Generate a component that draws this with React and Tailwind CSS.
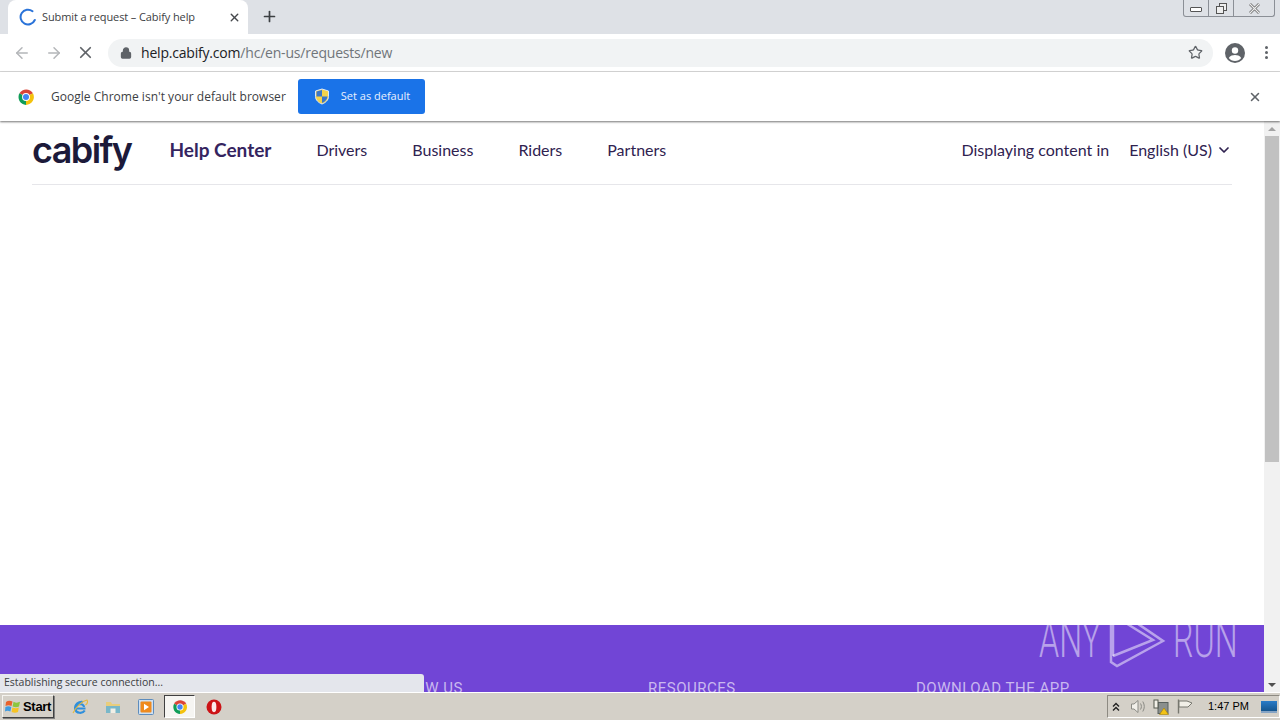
import React from "react";
import { ArrowLeft, ArrowRight, X, Plus, Lock, Star, ChevronDown } from "lucide-react";

const sans = "font-['Open_Sans',sans-serif]";
const nav = "font-['Lato',sans-serif]";

const ChromeLogo = ({ size = 18 }) => (
  <svg width={size} height={size} viewBox="0 0 48 48">
    <path d="M24 24 L6.5 14 A21 21 0 0 1 42.5 14 Z" fill="#db4437" />
    <path d="M24 24 L42.5 14 A21 21 0 0 1 24 45 Z" fill="#f4c20d" />
    <path d="M24 24 L24 45 A21 21 0 0 1 6.5 14 Z" fill="#0f9d58" />
    <circle cx="24" cy="24" r="10.5" fill="#fff" />
    <circle cx="24" cy="24" r="8" fill="#4285f4" />
  </svg>
);

const Shield = () => (
  <svg width="16" height="17" viewBox="0 0 16 17">
    <path d="M8 1 L14.5 3 V8.5 C14.5 12 11.5 14.8 8 16 C4.5 14.8 1.5 12 1.5 8.5 V3 Z" fill="#f3d34a" stroke="#dfe8f5" strokeWidth="1" />
    <path d="M8 2 V8.5 H2.5 V3.6 Z" fill="#3a76c9" />
    <path d="M8 8.5 H13.5 C13.2 11.5 10.8 14 8 15 Z" fill="#3a76c9" />
  </svg>
);

const Spinner = () => (
  <svg width="18" height="18" viewBox="0 0 18 18" fill="none">
    <path d="M13.5 3.2 A7.4 7.4 0 1 0 15.8 12" stroke="#2a73d9" strokeWidth="2" strokeLinecap="round" />
  </svg>
);

const Avatar = () => (
  <svg width="20" height="20" viewBox="0 0 20 20">
    <circle cx="10" cy="10" r="10" fill="#5f6368" />
    <circle cx="10" cy="7.5" r="3.2" fill="#fff" />
    <path d="M3.8 15 C5 12.6 8 12 10 12 C12 12 15 12.6 16.2 15 C14.8 16.8 12.6 18 10 18 C7.4 18 5.2 16.8 3.8 15 Z" fill="#fff" />
  </svg>
);

const WindowControls = () => (
  <div className="absolute right-[5px] top-0 flex h-[17px] w-[92px] rounded-b-[3px] border border-t-0 border-[#8b8f96] bg-[#dee1e6]">
    <div className="flex w-[25px] items-center justify-center border-r border-[#8b8f96]">
      <div className="mt-[3px] h-[5px] w-[12px] rounded-[1px] border border-[#555] bg-white" />
    </div>
    <div className="flex w-[25px] items-center justify-center border-r border-[#8b8f96]">
      <svg width="13" height="13" viewBox="0 0 13 13" fill="none" stroke="#555">
        <rect x="4.5" y="1.5" width="7" height="7" fill="#eee" />
        <rect x="1.5" y="4.5" width="7" height="7" fill="#eee" />
      </svg>
    </div>
    <div className="flex flex-1 items-center justify-center">
      <svg width="13" height="11" viewBox="0 0 13 11">
        <path d="M2 1 L11 10 M11 1 L2 10" stroke="#666" strokeWidth="2.6" />
        <path d="M2 1 L11 10 M11 1 L2 10" stroke="#eee" strokeWidth="1.1" />
      </svg>
    </div>
  </div>
);

const TabStrip = () => (
  <div className="relative flex h-[34px] shrink-0 items-end bg-[#dee1e6] pl-2">
    <div className={`flex h-[34px] w-[240px] items-center rounded-t-lg bg-white pl-[11px] pr-[7px] ${sans}`}>
      <Spinner />
      <span className="ml-[5px] flex-1 text-[11px] tracking-[-0.1px] text-[#3c4043]">Submit a request – Cabify help</span>
      <X size={13} strokeWidth={2.6} className="text-[#45484c]" />
    </div>
    <Plus size={17} strokeWidth={2.4} className="mb-[9px] ml-[13px] text-[#3c4043]" />
    <WindowControls />
  </div>
);

const Toolbar = () => (
  <div className="flex h-[38px] shrink-0 items-center border-b border-[#d9d9d9] bg-white pl-[13px] pr-[12px]">
    <ArrowLeft size={18} strokeWidth={2} className="text-[#b4b6b9]" />
    <ArrowRight size={18} strokeWidth={2} className="ml-[14px] text-[#b4b6b9]" />
    <X size={19} strokeWidth={2.2} className="ml-[13px] text-[#5f6368]" />
    <div className="ml-[13px] flex h-[28px] flex-1 items-center rounded-full bg-[#f1f3f4] pl-[12px] pr-[10px]">
      <Lock size={12} strokeWidth={2.6} fill="#5f6368" className="text-[#5f6368]" />
      <span className={`ml-[9px] flex-1 text-[14px] tracking-[-0.2px] ${sans}`}>
        <span className="text-[#202124]">help.cabify.com</span>
        <span className="text-[#70757a]">/hc/en-us/requests/new</span>
      </span>
      <Star size={15} strokeWidth={2} className="text-[#5f6368]" />
    </div>
    <div className="ml-[12px]"><Avatar /></div>
    <div className="ml-[20px] flex flex-col gap-[2px]">
      <span className="h-[3px] w-[3px] rounded-full bg-[#5f6368]" />
      <span className="h-[3px] w-[3px] rounded-full bg-[#5f6368]" />
      <span className="h-[3px] w-[3px] rounded-full bg-[#5f6368]" />
    </div>
  </div>
);

const Infobar = () => (
  <div className={`relative z-10 flex h-[49px] shrink-0 items-center bg-white pl-[17px] pr-[18px] shadow-[0_1px_2px_rgba(0,0,0,0.55)] ${sans}`}>
    <ChromeLogo />
    <span className="ml-[16px] text-[12px] tracking-[0.02px] text-[#3c4043]">Google Chrome isn't your default browser</span>
    <div className="ml-[12px] flex h-[35px] w-[127px] items-center rounded-[3px] bg-[#1a73e8] pl-[16px]">
      <Shield />
      <span className="ml-[11px] text-[11px] text-[#e8f0fe]">Set as default</span>
    </div>
    <X size={14} strokeWidth={2.6} className="ml-auto text-[#5f6368]" />
  </div>
);

const SiteHeader = () => (
  <div className={`mx-[32px] flex h-[64px] shrink-0 items-center border-b border-[#e6e6ea] pb-[5px] text-[#2f2250] ${nav}`}>
    <span className="font-['Inter',sans-serif] text-[36px] font-semibold leading-none tracking-[-1.6px] text-[#1c1a3a]">cabify</span>
    <span className="ml-[38px] text-[19px] font-bold text-[#35245f]">Help Center</span>
    <span className="ml-[45px] text-[16px]">Drivers</span>
    <span className="ml-[45px] text-[16px]">Business</span>
    <span className="ml-[45px] text-[16px]">Riders</span>
    <span className="ml-[45px] text-[16px]">Partners</span>
    <span className="ml-auto text-[16px]">Displaying content in</span>
    <span className="ml-[20px] text-[16px]">English (US)</span>
    <ChevronDown size={16} strokeWidth={2.6} className="ml-[4px]" />
  </div>
);

const Footer = () => (
  <div className="mt-auto flex h-[67px] shrink-0 overflow-hidden bg-[#7145d6] pl-[336px] pt-[55px] font-['Roboto',sans-serif] text-[15px] leading-[17px] tracking-[0.5px] text-[#c9b8ef]">
    <span className="w-[312px]">GET TO KNOW US</span>
    <span className="w-[268px]">RESOURCES</span>
    <span>DOWNLOAD THE APP</span>
  </div>
);

const Scrollbar = () => (
  <div className="flex w-[16px] shrink-0 flex-col bg-[#f1f1f1]">
    <div className="flex h-[15px] items-center justify-center">
      <div className="h-0 w-0 border-x-[4px] border-b-[4px] border-x-transparent border-b-[#a3a3a3]" />
    </div>
    <div className="mx-px h-[326px] bg-[#c1c1c1]" />
    <div className="mt-auto flex h-[15px] items-center justify-center">
      <div className="h-0 w-0 border-x-[4px] border-t-[4px] border-x-transparent border-t-[#505050]" />
    </div>
  </div>
);

const Watermark = () => (
  <div className="absolute left-[1039px] top-[608px] flex h-[64px] w-[192px] items-center font-['Roboto',sans-serif] font-light text-white/50">
    <span className="w-[62px] origin-left scale-x-[0.62] text-[52px] leading-none">ANY</span>
    <svg width="64" height="64" viewBox="0 0 64 64" fill="none" stroke="currentColor" strokeWidth="2.5" className="mx-[4px] shrink-0">
      <path d="M6 14 V54 L12 58 L58 33 L14 3 L8 6 V48" />
      <path d="M8 48 L48 32 L16 12" />
    </svg>
    <span className="w-[62px] origin-left scale-x-[0.62] text-[52px] leading-none">RUN</span>
  </div>
);

const StatusBubble = () => (
  <div className={`absolute bottom-[28px] left-0 flex h-[18px] w-[424px] items-center rounded-tr-[3px] bg-[#e4e6ec] pl-[4px] text-[10.5px] text-[#3c4043] ${sans}`}>
    Establishing secure connection...
  </div>
);

const StartFlag = () => (
  <svg width="16" height="15" viewBox="0 0 16 15">
    <path d="M1 3 C3 1.5 5 1.5 7.5 2.5 L6.5 7 C4.5 6 2.5 6 0.5 7 Z" fill="#e8622c" />
    <path d="M8.5 2.8 C11 4 13 3.8 15 2.8 L14 7.5 C12 8.5 10 8.5 7.6 7.5 Z" fill="#8cc63f" />
    <path d="M0.4 8 C2.4 7 4.4 7 6.3 8 L5.4 12.5 C3.5 11.5 1.5 11.5 0 12.5 Z" fill="#3f9be0" />
    <path d="M7.4 8.4 C9.8 9.4 11.8 9.4 13.8 8.4 L13 13 C11 14 9 14 6.6 13 Z" fill="#f6c324" />
  </svg>
);

const IeIcon = () => (
  <svg width="18" height="18" viewBox="0 0 18 18" fill="none">
    <path d="M14.5 10.5 H4.5 C4.5 5.5 12.5 4.5 13 9 M13.8 12.5 C11.5 16 5 15.5 4.2 11 C3.5 6.5 8 3 12 4" stroke="#2f8fdc" strokeWidth="2.2" />
    <path d="M2 15 C5 9 11 3 16 2 C17 4 16 6 14.5 7" stroke="#e6b93c" strokeWidth="1.1" />
  </svg>
);

const ExplorerIcon = () => (
  <svg width="16" height="16" viewBox="0 0 16 16">
    <path d="M1 3 H6 L7 5 H15 V14 H1 Z" fill="#e9cd7c" />
    <rect x="1" y="7" width="14" height="7" fill="#79b7c9" />
    <rect x="5.5" y="9.5" width="5" height="4.5" fill="#f1efe6" />
  </svg>
);

const MediaIcon = () => (
  <svg width="16" height="16" viewBox="0 0 16 16">
    <rect x="0.5" y="0.5" width="15" height="15" rx="1" fill="#cfe0f1" stroke="#5d8cbd" />
    <rect x="2.5" y="2.5" width="11" height="11" rx="1" fill="#ef8a1d" />
    <path d="M6 4.8 L11 8 L6 11.2 Z" fill="#fff" />
  </svg>
);

const OperaIcon = () => (
  <svg width="16" height="16" viewBox="0 0 16 16">
    <circle cx="8" cy="8" r="7.5" fill="#cc1316" />
    <ellipse cx="8" cy="8" rx="2.4" ry="5.2" fill="#fbeaea" />
  </svg>
);

const TrayIcons = () => (
  <div className="flex items-center text-[#5c5c5c]">
    <svg width="8" height="10" viewBox="0 0 8 10" fill="none" stroke="#222" strokeWidth="1.4">
      <path d="M1 4.5 L4 1.5 L7 4.5 M1 8.5 L4 5.5 L7 8.5" />
    </svg>
    <svg width="16" height="15" viewBox="0 0 16 15" fill="none" stroke="#8b8b85" className="ml-[10px]">
      <path d="M1.5 5 H4 L8 1.5 V13.5 L4 10 H1.5 Z" fill="#f2f0ea" />
      <path d="M10.5 4.5 C11.7 6.5 11.7 8.5 10.5 10.5 M12.8 2.5 C14.8 6 14.8 9 12.8 12.5" />
    </svg>
    <svg width="16" height="16" viewBox="0 0 16 16" className="ml-[7px]">
      <rect x="5" y="3.5" width="10" height="11" fill="#8a8f8d" stroke="#59605e" />
      <rect x="1" y="1" width="4" height="8" fill="#f3f1e9" stroke="#55584f" />
      <path d="M11 9 L15.5 15.5 H6.5 Z" fill="#f3c315" stroke="#a57f05" strokeWidth="0.6" />
    </svg>
    <svg width="16" height="15" viewBox="0 0 16 15" fill="none" stroke="#77776f" className="ml-[8px]">
      <path d="M1.5 0.5 V14.5" strokeWidth="1.4" />
      <path d="M2 2 H10 L15 4 L11 8 H2 Z" fill="#f1efe7" />
    </svg>
  </div>
);

const Taskbar = () => (
  <div className="flex h-[28px] shrink-0 items-center border-t border-white bg-[#d4d0c8]">
    <div className="ml-[2px] flex h-[23px] w-[52px] items-center gap-[2px] border border-[#f5f4f0] border-b-[#404040] border-r-[#404040] pl-[2px] font-['Liberation_Sans',sans-serif] text-[13px] font-bold tracking-[-0.3px] text-black shadow-[1px_1px_0_#808080]">
      <StartFlag />
      <span>Start</span>
    </div>
    <div className="ml-[17px]"><IeIcon /></div>
    <div className="ml-[16px]"><ExplorerIcon /></div>
    <div className="ml-[17px]"><MediaIcon /></div>
    <div className="ml-[10px] flex h-[23px] w-[31px] items-center justify-center border border-[#404040] border-b-white border-r-white bg-[#f6f5f2]">
      <ChromeLogo size={16} />
    </div>
    <div className="ml-[11px]"><OperaIcon /></div>
    <div className="ml-auto flex h-[23px] w-[173px] items-center border border-[#8d8a82] border-b-white border-r-white pl-[4px]">
      <TrayIcons />
      <span className="ml-[15px] font-['Liberation_Sans',sans-serif] text-[11px] text-black">1:47 PM</span>
      <div className="ml-[12px] h-[12px] w-[16px] border-b-2 border-[#86a4c4] bg-gradient-to-b from-[#2a7cc8] to-[#16568f]" />
    </div>
  </div>
);

export default function App() {
  return (
    <div className="relative flex h-[720px] w-[1280px] flex-col overflow-hidden bg-white">
      <TabStrip />
      <Toolbar />
      <Infobar />
      <div className="flex min-h-0 flex-1">
        <div className="flex min-w-0 flex-1 flex-col">
          <SiteHeader />
          <Footer />
        </div>
        <Scrollbar />
      </div>
      <Taskbar />
      <Watermark />
      <StatusBubble />
    </div>
  );
}
